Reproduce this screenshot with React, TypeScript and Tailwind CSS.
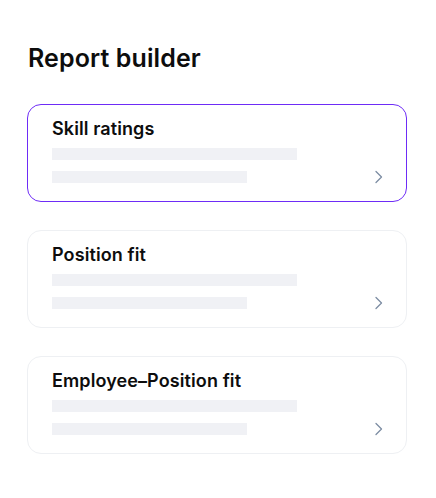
const reports = [
  { title: "Skill ratings", active: true },
  { title: "Position fit", active: false },
  { title: "Employee–Position fit", active: false },
];

const Chevron = () => (
  <svg width="10" height="14" viewBox="0 0 10 14" fill="none" className="text-[#7d8da3]">
    <path d="M2 1.5L7.5 7L2 12.5" stroke="currentColor" strokeWidth="1.3" strokeLinecap="round" strokeLinejoin="round" />
  </svg>
);

const App = () => {
  return (
    <div className="w-[436px] h-[498px] bg-white px-[27px] pt-[42px] font-['Inter',sans-serif] text-[#0d0d0d]">
      <h1 className="text-[25px] leading-8 font-semibold tracking-[0.1px] pl-px">Report builder</h1>
      <div className="mt-[30px] flex flex-col gap-[28px]">
        {reports.map((r) => (
          <div
            key={r.title}
            className={`h-[98px] w-[380px] rounded-[14px] border bg-white pl-[24px] pr-[22px] pt-[10px] ${
              r.active ? "border-[#6e2cf6]" : "border-[#eef0f3]"
            }`}
          >
            <div className="text-[18px] leading-7 font-semibold tracking-[0.1px]">{r.title}</div>
            <div className="mt-[5px] h-3 w-[245px] bg-[#f0f1f5]" />
            <div className="mt-[10px] flex items-center justify-between">
              <div className="h-3 w-[195px] bg-[#f0f1f5]" />
              <Chevron />
            </div>
          </div>
        ))}
      </div>
    </div>
  );
};

export default App;
